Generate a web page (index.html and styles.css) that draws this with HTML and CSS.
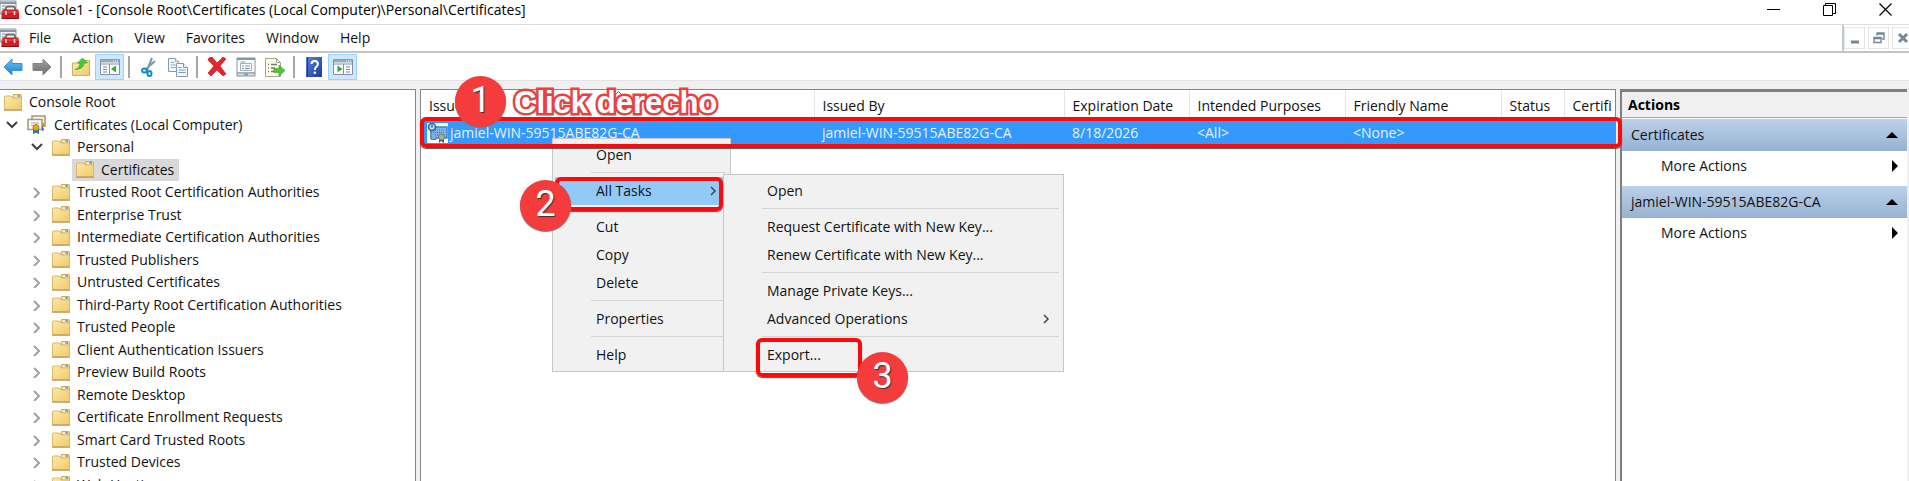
FILE: index.html
```html
<!DOCTYPE html>
<html lang="en">
<head>
<meta charset="utf-8">
<title>Console1</title>
<link rel="stylesheet" href="styles.css">
</head>
<body>
<svg class="defs" aria-hidden="true">
  <defs>
    <linearGradient id="gold" x1="0" y1="0" x2="1" y2="1"><stop offset="0" stop-color="#ffe9a6"/><stop offset="1" stop-color="#efca6c"/></linearGradient>
    <linearGradient id="blue" x1="0" y1="0" x2="0" y2="1"><stop offset="0" stop-color="#6cc4f5"/><stop offset="1" stop-color="#1583d0"/></linearGradient>
    <linearGradient id="grey" x1="0" y1="0" x2="0" y2="1"><stop offset="0" stop-color="#a2a2a2"/><stop offset="1" stop-color="#6c6c6c"/></linearGradient>
    <linearGradient id="help" x1="0" y1="0" x2="1" y2="1"><stop offset="0" stop-color="#5c83dd"/><stop offset="1" stop-color="#1c3a9c"/></linearGradient>
  </defs>
  <symbol id="folder" viewBox="0 0 18 17">
    <path d="M9 4V1.500Q9 .5 10 .5h6.500q1 0 1 1V5z" fill="#f3d995" stroke="#cda75a"/>
    <path d="M.5 3Q.5 2 1.500 2H7l2 2h8.500v11.500H.5z" fill="url(#gold)" stroke="#d9b76e"/>
    <path d="M11 2h2" stroke="#fff"/><path d="M13.500 2h2.500" stroke="#3c9be0" stroke-width="1.500"/>
    <path d="M0 16.200h18" stroke="#b08c45"/>
  </symbol>
  <symbol id="certs" viewBox="0 0 19 19">
    <path d="M5 1h13v10H5z" fill="#f8f3e6" stroke="#a8977a" stroke-width="1.600"/>
    <path d="M1 4.500h14v10H1z" fill="#fffdf8" stroke="#a8977a" stroke-width="1.600"/>
    <path d="M4 8h8M4 10.500h4" stroke="#8fa1d8"/>
    <path d="M6.500 13v5.500l2.500-1.500 2.500 1.500V13M15.500 11v4.500l1.500-1" fill="#2769d8" stroke="#2769d8"/>
    <circle cx="9" cy="12.500" r="3" fill="#e5a914" stroke="#b97f08"/><path d="M16.500 8v4" stroke="#d5980b" stroke-width="2"/>
  </symbol>
  <symbol id="rowcert" viewBox="0 0 21 20">
    <path d="M0 0h21v20H0z" fill="#fff"/>
    <path d="M4 4h16v11H4z" fill="#7db4f0" stroke="#3c80c4" stroke-width="1.500"/>
    <path d="M6 7h12M6 9.500h12M6 12h9" stroke="#2c76cc" stroke-dasharray="1 1"/>
    <path d="M4 8v8.500h5V14" fill="#7dafe8" stroke="#3c80c4"/>
    <circle cx="5" cy="4" r="3.500" fill="#b6dcf0" stroke="#24648c" stroke-width="1.500"/><path d="M5 2v2.500" stroke="#123"/>
    <path d="M12 15v5l2-2 3 2v-5z" fill="#1760c8"/><circle cx="14.500" cy="14" r="3" fill="#a7b981" stroke="#657d68"/>
  </symbol>
  <symbol id="toolbox" viewBox="0 0 20 20">
    <path d="M0 1h16v13H0z" fill="#edf1f5" stroke="#8797a5"/><path d="M0 3h16" stroke="#8797a5" stroke-width="2"/><path d="M2 6h4M2 9h3" stroke="#aab4bd" stroke-width="1.500"/>
    <path d="M6 11V8.500Q6 6.500 8 6.500h5q2 0 2 2V11" fill="none" stroke="#6e6e6e" stroke-width="1.800"/>
    <path d="M3 9.500h15l1 2V19H1.500v-7z" fill="#d21d21"/><path d="M2 12h17" stroke="#f2595a"/><path d="M1.500 18.500H19" stroke="#97090e"/>
    <path d="M6 11v4M14.500 11v4" stroke="#f4dada" stroke-width="1.600"/>
  </symbol>
  <symbol id="down" viewBox="0 0 12 12"><path d="M1 3l5 5 5-5" fill="none" stroke="#404040" stroke-width="2"/></symbol>
  <symbol id="right" viewBox="0 0 12 12"><path d="M3 2l5 5-5 5" fill="none" stroke="#a0a0a0" stroke-width="2"/></symbol>
  <symbol id="sub" viewBox="0 0 8 10"><path d="M2 1l4 4-4 4" fill="none" stroke="#444" stroke-width="1.500"/></symbol>
  <symbol id="pane" viewBox="0 0 20 18">
    <path d="M.5 1.500h19v15H.5z" fill="#fff" stroke="#8290a0"/><path d="M1 3h18" stroke="#9ba8b5" stroke-width="3"/><path d="M13 3h1M15 3h1M17 3h1" stroke="#fff"/><path d="M1 6h18" stroke="#8290a0"/>
  </symbol>
</svg>

<header class="titlebar">
  <svg class="i20"><use href="#toolbox"/></svg>
  <span class="title">Console1 - [Console Root\Certificates (Local Computer)\Personal\Certificates]</span>
  <button class="win" aria-label="Minimize"><svg width="13" height="13"><path d="M0 6.500h13" stroke="#000"/></svg></button>
  <button class="win" aria-label="Restore"><svg width="13" height="13" fill="none" stroke="#000"><path d="M.5 2.500h9v10h-9zM2.500 2.500v-2h10v10h-3"/></svg></button>
  <button class="win" aria-label="Close"><svg width="13" height="13"><path d="M.5 .5l12 12M12.500 .5l-12 12" stroke="#000" stroke-width="1.200"/></svg></button>
</header>

<nav class="menubar">
  <svg class="i20"><use href="#toolbox"/></svg>
  <div class="menus">
    <button>File</button><button>Action</button><button>View</button><button>Favorites</button><button>Window</button><button>Help</button>
  </div>
  <div class="mdi">
    <button aria-label="Minimize window"><svg width="12" height="12"><path d="M2 10h8" stroke="#76879b" stroke-width="3"/></svg></button>
    <button aria-label="Restore window"><svg width="12" height="12" fill="none" stroke="#76879b"><path d="M1 5.500h7v5H1zM1 6.500h7M4 3.500V1h7v6H9M4 2h7" stroke-width="1.400"/></svg></button>
    <button aria-label="Close window"><svg width="12" height="12"><path d="M2 2l8 8M10 2l-8 8" stroke="#76879b" stroke-width="3"/></svg></button>
  </div>
</nav>

<div class="toolbar" role="toolbar" aria-label="Standard">
  <button aria-label="Back"><svg width="20" height="18"><path d="M1 9l8-8v4.500h10v7H9V17z" fill="url(#blue)" stroke="#3a94d0"/></svg></button>
  <button aria-label="Forward"><svg width="20" height="18"><path d="M19 9l-8-8v4.500H1v7h10V17z" fill="url(#grey)" stroke="#858585"/></svg></button>
  <i></i>
  <button aria-label="Up one level"><svg width="18" height="18"><path d="M.5 5h8l2-2.500h7v15H.5z" fill="url(#gold)" stroke="#d2ac5c"/><path d="M3 11.500Q8 10 8 5H5.500L10.500 0l5 5H12q0 6-9 6.500z" fill="#45c936" stroke="#2c9d22" stroke-width=".6"/></svg></button>
  <button class="on" aria-label="Console tree"><svg width="20" height="18"><use href="#pane"/><path d="M9.500 6v10" stroke="#8290a0"/><path d="M3 9h4M3 11.500h4M3 14h4" stroke="#5687bd"/><path d="M16 7.500v7L11 11z" fill="#2fae2b"/></svg></button>
  <i></i>
  <button aria-label="Cut"><svg width="16" height="20" fill="none"><path d="M11 1L6 13M14 4L4 13" stroke="#7b98b0" stroke-width="2"/><ellipse cx="3.500" cy="13.500" rx="2.500" ry="2" stroke="#1c86cf" stroke-width="2"/><ellipse cx="8.500" cy="16.500" rx="2" ry="2.500" stroke="#1c86cf" stroke-width="2"/></svg></button>
  <button aria-label="Copy"><svg width="20" height="19" fill="#f5f9fe" stroke="#8b9bb2"><path d="M.5 .5h7l3 3v10H.5z"/><path d="M7.500 .5v3h3M2.500 4.500h4M2.500 7h6M2.500 9.500h6" stroke="#8eaed1"/><path d="M8.500 5.500h7l4 4v9h-11z"/><path d="M15.500 5.500v4h4M10.500 9.500h3M10.500 12h7M10.500 14.500h7" stroke="#6f9bcc"/></svg></button>
  <i></i>
  <button aria-label="Delete"><svg width="20" height="20"><path d="M2 1l3-1 5 6 6-6 3 2-6 7 6 8-3 2-6-6-6 6-3-3 6-7-6-6z" fill="#e5252a" stroke="#b80f14" stroke-width=".6"/></svg></button>
  <button aria-label="Properties"><svg width="20" height="20" fill="#fff" stroke="#8a949e"><path d="M1 1h18v15H1z"/><path d="M1 2h18" stroke-width="2"/><path d="M4.500 6.500h11v7h-11z" stroke="#a5afb9"/><path d="M4.500 5h5M6 9h2M9 9h5M6 11.500h2M9 11.500h5" stroke="#7897b5"/><path d="M1 16h18v3H1z" fill="#d7dde2"/><path d="M8 17.500h4" stroke="#42b4db" stroke-width="2"/></svg></button>
  <button aria-label="Export list"><svg width="20" height="19"><path d="M.5 .5h11l4 4v14H.5z" fill="#fffce9" stroke="#a6a294"/><path d="M11.500 .5v4h4" fill="none" stroke="#a6a294"/><path d="M3 6.500h1M6 6.500h6M3 10h1M6 10h4M3 13.500h1M6 13.500h4" stroke="#77787a" stroke-width="1.300"/><path d="M9 10.500h5V7l6 5.500-6 5.500v-3.500H9z" fill="#51c33d" stroke="#3a9d2b" stroke-width=".6"/></svg></button>
  <i></i>
  <button aria-label="Help"><svg width="16" height="20"><path d="M0 0h16v20H0z" fill="url(#help)"/><path d="M1.500 0v20" stroke="#1d3b96"/><path d="M5.500 7Q5.500 4 8.700 4t3.200 3q0 1.500-1.500 2.700T8.800 13" fill="none" stroke="#fff" stroke-width="2"/><circle cx="8.800" cy="15.800" r="1.300" fill="#fff"/></svg></button>
  <button class="on" aria-label="Action pane"><svg width="20" height="18"><use href="#pane"/><path d="M10.500 6v10" stroke="#8290a0"/><path d="M13 9h4M13 11.500h4M13 14h4" stroke="#5687bd"/><path d="M4.500 7.500v7l5-3.500z" fill="#2fae2b"/></svg></button>
</div>

<main class="panes">
  <ul class="tree">
    <li class="l0"><svg class="fold"><use href="#folder"/></svg><a href="#">Console Root</a></li>
    <li class="l1"><svg class="chev"><use href="#down"/></svg><svg class="cert"><use href="#certs"/></svg><a href="#">Certificates (Local Computer)</a></li>
    <li class="l2"><svg class="chev"><use href="#down"/></svg><svg class="fold"><use href="#folder"/></svg><a href="#">Personal</a></li>
    <li class="l3"><span class="picked"><svg class="fold"><use href="#folder"/></svg><a href="#">Certificates</a></span></li>
    <li class="l2"><svg class="chev"><use href="#right"/></svg><svg class="fold"><use href="#folder"/></svg><a href="#">Trusted Root Certification Authorities</a></li>
    <li class="l2"><svg class="chev"><use href="#right"/></svg><svg class="fold"><use href="#folder"/></svg><a href="#">Enterprise Trust</a></li>
    <li class="l2"><svg class="chev"><use href="#right"/></svg><svg class="fold"><use href="#folder"/></svg><a href="#">Intermediate Certification Authorities</a></li>
    <li class="l2"><svg class="chev"><use href="#right"/></svg><svg class="fold"><use href="#folder"/></svg><a href="#">Trusted Publishers</a></li>
    <li class="l2"><svg class="chev"><use href="#right"/></svg><svg class="fold"><use href="#folder"/></svg><a href="#">Untrusted Certificates</a></li>
    <li class="l2"><svg class="chev"><use href="#right"/></svg><svg class="fold"><use href="#folder"/></svg><a href="#">Third-Party Root Certification Authorities</a></li>
    <li class="l2"><svg class="chev"><use href="#right"/></svg><svg class="fold"><use href="#folder"/></svg><a href="#">Trusted People</a></li>
    <li class="l2"><svg class="chev"><use href="#right"/></svg><svg class="fold"><use href="#folder"/></svg><a href="#">Client Authentication Issuers</a></li>
    <li class="l2"><svg class="chev"><use href="#right"/></svg><svg class="fold"><use href="#folder"/></svg><a href="#">Preview Build Roots</a></li>
    <li class="l2"><svg class="chev"><use href="#right"/></svg><svg class="fold"><use href="#folder"/></svg><a href="#">Remote Desktop</a></li>
    <li class="l2"><svg class="chev"><use href="#right"/></svg><svg class="fold"><use href="#folder"/></svg><a href="#">Certificate Enrollment Requests</a></li>
    <li class="l2"><svg class="chev"><use href="#right"/></svg><svg class="fold"><use href="#folder"/></svg><a href="#">Smart Card Trusted Roots</a></li>
    <li class="l2"><svg class="chev"><use href="#right"/></svg><svg class="fold"><use href="#folder"/></svg><a href="#">Trusted Devices</a></li>
    <li class="l2"><svg class="chev"><use href="#right"/></svg><svg class="fold"><use href="#folder"/></svg><a href="#">Web Hosting</a></li>
  </ul>

  <section class="list">
    <table>
      <colgroup><col class="c1"><col class="c2"><col class="c3"><col class="c4"><col class="c5"><col class="c6"><col></colgroup>
      <thead><tr><th>Issued To</th><th>Issued By</th><th>Expiration Date</th><th>Intended Purposes</th><th>Friendly Name</th><th>Status</th><th>Certifi</th></tr></thead>
      <tbody><tr><td class="name"><svg class="rowicon"><use href="#rowcert"/></svg><span>jamiel-WIN-59515ABE82G-CA</span></td><td>jamiel-WIN-59515ABE82G-CA</td><td>8/18/2026</td><td>&lt;All&gt;</td><td>&lt;None&gt;</td><td></td><td></td></tr></tbody>
    </table>
    <svg class="sort" width="9" height="5"><path d="M.5 4.500l4-4 4 4" fill="none" stroke="#666"/></svg>

    <div class="menu context">
      <button>Open</button><hr>
      <button class="hot">All Tasks<svg class="subarrow"><use href="#sub"/></svg></button><hr>
      <button>Cut</button><button>Copy</button><button>Delete</button><hr>
      <button>Properties</button><hr>
      <button>Help</button>
    </div>
    <div class="menu tasks">
      <button>Open</button><hr>
      <button>Request Certificate with New Key...</button><button>Renew Certificate with New Key...</button><hr>
      <button>Manage Private Keys...</button><button>Advanced Operations<svg class="subarrow"><use href="#sub"/></svg></button><hr>
      <button>Export...</button>
    </div>

    <div class="frame f1"></div>
    <div class="frame f2"></div>
    <div class="frame f3"></div>
    <span class="step s1">1</span>
    <span class="step s2">2</span>
    <span class="step s3">3</span>
    <span class="note">Click derecho</span>
  </section>

  <aside class="actions">
    <h2>Actions</h2>
    <button class="group">Certificates<svg width="12" height="6"><path d="M0 6l6-6 6 6z"/></svg></button>
    <button class="more">More Actions<svg width="6" height="12"><path d="M0 0l6 6-6 6z"/></svg></button>
    <button class="group">jamiel-WIN-59515ABE82G-CA<svg width="12" height="6"><path d="M0 6l6-6 6 6z"/></svg></button>
    <button class="more">More Actions<svg width="6" height="12"><path d="M0 0l6 6-6 6z"/></svg></button>
  </aside>
</main>
</body>
</html>
```
FILE: styles.css
```css
* { box-sizing: border-box; }
body {
  margin: 0;
  height: 100vh;
  overflow: hidden;
  display: flex;
  flex-direction: column;
  background: #f0f0f0;
  color: #111;
  font: 14px/20px "Open Sans", "Noto Sans", sans-serif;
}
button {
  margin: 0;
  padding: 0;
  border: 0;
  background: none;
  color: inherit;
  font: inherit;
  text-align: left;
}
svg { display: block; flex: none; }
a { color: inherit; text-decoration: none; }
.defs { position: absolute; width: 0; height: 0; }
.i20 { width: 20px; height: 20px; }

.titlebar { display: flex; align-items: center; gap: 8px; height: 24px; flex: none; background: #fff; padding-bottom: 5px; color: #000; }
.title { flex: 1; margin-left: -4px; white-space: nowrap; }
.win { width: 48px; display: flex; justify-content: center; }

.menubar { display: flex; align-items: center; height: 29px; flex: none; background: #fff; border-top: 1px solid #dcdcdc; border-bottom: 2px solid #c4c4c4; }
.menus { flex: 1; display: flex; gap: 21px; padding-left: 9px; }
.mdi { display: flex; gap: 3px; align-self: stretch; padding: 2px 0; border-left: 2px solid #c4c8d0; overflow: hidden; width: 67px; }
.mdi button { flex: none; width: 21px; display: grid; place-items: center; border: 1px solid #e6e6e6; }

.toolbar { display: flex; align-items: center; height: 28px; flex: none; margin-left: -2px; padding-top: 1px; background: #fff; border-bottom: 1px solid #e4e4e4; }
.toolbar button { width: 29px; height: 26px; display: grid; place-items: center; }
.toolbar .on { background: #cce8ff; border: 1px solid #99d1ff; }
.toolbar i { width: 2px; height: 22px; margin: 0 4px; background: #a6a6a6; }

.panes { flex: 1; display: flex; min-height: 0; padding: 8px 2px 0 0; }
.tree { flex: none; width: 416px; margin: 0; padding: 1px 0 0; list-style: none; overflow: hidden; background: #fff; border: solid #828790; border-width: 1px 1px 0 0; }
.tree li { display: flex; align-items: center; height: 22px; white-space: nowrap; }
.tree li:nth-child(even) { height: 23px; }
.fold { width: 18px; height: 17px; margin-right: 7px; }
.cert { width: 19px; height: 19px; margin-right: 8px; }
.chev { width: 12px; height: 12px; margin-right: 9px; }
.l0 { padding-left: 4px; }
.l1 { padding-left: 6px; }
.l2 { padding-left: 31px; }
.l3 { padding-left: 72px; }
.picked { display: flex; align-items: center; height: 22px; padding: 0 5px 0 4px; background: #d9d9d9; }

.list { position: relative; flex: 1; min-width: 0; margin-left: 4px; background: #fff; border: solid #828790; border-width: 1px 1px 0; }
table { width: 100%; table-layout: fixed; border-collapse: collapse; }
.c1 { width: 393px; }
.c2 { width: 250px; }
.c3 { width: 125px; }
.c4 { width: 156px; }
.c5 { width: 156px; }
.c6 { width: 63px; }
th, td { padding: 0 0 0 8px; text-align: left; font-weight: 400; white-space: nowrap; overflow: hidden; }
th { height: 31px; border-right: 1px solid #e5e5e5; }
th:last-child { border: 0; }
tbody tr { height: 23px; background: #3399ff; color: #e8f2ff; }
.name { display: flex; align-items: center; height: 23px; padding-left: 6px; gap: 2px; }
.rowicon { width: 21px; height: 20px; }
.sort { position: absolute; left: 193px; top: 1px; }

.menu { position: absolute; padding: 2px; background: #f1f1f1; border: 1px solid #c6c6c6; }
.menu button { display: flex; align-items: center; width: 100%; height: 28px; padding-left: 41px; }
.menu hr { height: 1px; margin: 3px 2px 4px 36px; border: 0; background: #d4d4d4; }
.menu .hot { background: #91c9f7; }
.subarrow { width: 8px; height: 10px; margin-left: auto; margin-right: 11px; }
.context { left: 131px; top: 48px; width: 179px; }
.tasks { left: 302px; top: 84px; width: 341px; }

.frame { position: absolute; border: 4px solid #fb0a0c; border-radius: 6px; box-shadow: 0 1px 1px #555; }
.f1 { left: -1px; right: -7px; top: 27px; height: 31px; }
.f2 { left: 134px; top: 87px; width: 168px; height: 34px; }
.f3 { left: 335px; top: 248px; width: 106px; height: 39px; }
.step {
  position: absolute;
  width: 51px;
  height: 51px;
  border-radius: 50%;
  background: #f43c3c;
  box-shadow: 0 1px 1px #777;
  color: #fff;
  font: 36px/48px Roboto, "Liberation Sans", sans-serif;
  text-align: center;
  text-shadow: 1px 1px 1px #333;
}
.s1 { left: 34px; top: -14px; }
.s2 { left: 99px; top: 90px; }
.s3 { left: 436px; top: 262px; }
.note {
  position: absolute;
  left: 93px;
  top: -4px;
  color: #fff;
  font: bold 31px/34px "Liberation Sans", Arial, sans-serif;
  -webkit-text-stroke: 5px #f43c3c;
  paint-order: stroke fill;
  text-shadow: 0 1px 1px #777;
  white-space: nowrap;
}

.actions { flex: none; width: 287px; margin-left: 4px; background: #fff; border: solid #7f7f7f; border-width: 3px 0 0 2px; }
.actions h2 { margin: 0 0 1px; height: 26px; padding-left: 6px; background: #f0f0f0; border-bottom: 1px solid #a8a8a8; font-size: 14px; line-height: 26px; font-weight: 700; color: #000; }
.actions button { display: flex; align-items: center; justify-content: space-between; width: 100%; }
.actions .group { height: 32px; padding: 0 9px; background: linear-gradient(#bbd1ea, #98b2d2); }
.actions .more { height: 30px; margin-bottom: 5px; padding: 0 9px 0 39px; }
```
